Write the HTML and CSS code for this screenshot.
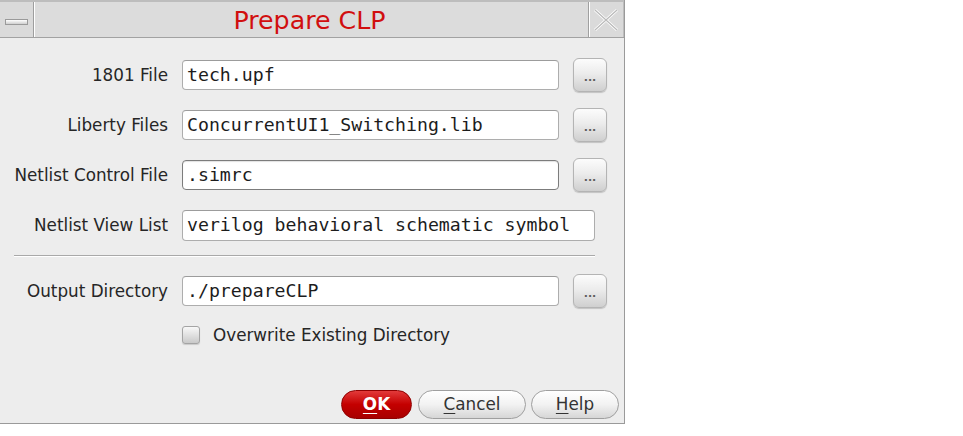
FILE: index.html
```html
<!DOCTYPE html>
<html>
<head>
<meta charset="utf-8">
<title>Prepare CLP</title>
<link rel="stylesheet" href="styles.css">
</head>
<body>
<div class="dialog">
  <div class="titlebar">
    <div class="tb-btn tb-min"><span class="min-bar"></span></div>
    <div class="tb-title">Prepare CLP</div>
    <div class="tb-btn tb-close">
      <svg width="26" height="24" viewBox="0 0 26 24">
        <path d="M2 2 L24 22 M24 2 L2 22" stroke="#ffffff" stroke-width="3" fill="none"/>
        <path d="M2 2 L24 22 M24 2 L2 22" stroke="#b9b9b9" stroke-width="1.2" fill="none"/>
      </svg>
    </div>
  </div>
  <div class="form">
    <div class="row">
      <label class="lbl">1801 File</label>
      <div class="field">tech.upf</div>
      <div class="browse">...</div>
    </div>
    <div class="row">
      <label class="lbl">Liberty Files</label>
      <div class="field">ConcurrentUI1_Switching.lib</div>
      <div class="browse">...</div>
    </div>
    <div class="row">
      <label class="lbl">Netlist Control File</label>
      <div class="field focus">.simrc</div>
      <div class="browse">...</div>
    </div>
    <div class="row">
      <label class="lbl">Netlist View List</label>
      <div class="field wide">verilog behavioral schematic symbol</div>
    </div>
    <div class="sep"></div>
    <div class="row">
      <label class="lbl">Output Directory</label>
      <div class="field">./prepareCLP</div>
      <div class="browse">...</div>
    </div>
    <div class="check-row">
      <span class="checkbox"></span>
      <span class="check-lbl">Overwrite Existing Directory</span>
    </div>
  </div>
  <div class="actions">
    <div class="btn ok"><u>O</u>K</div>
    <div class="btn cancel"><u>C</u>ancel</div>
    <div class="btn help"><u>H</u>elp</div>
  </div>
</div>
</body>
</html>
```

FILE: styles.css
```css
html, body {
  margin: 0;
  padding: 0;
  background: #ffffff;
}
body {
  font-family: "DejaVu Sans", sans-serif;
  color: #222222;
}
.dialog {
  width: 624px;
  height: 423px;
  background: #ededed;
  border-right: 1px solid #9a9a9a;
  border-bottom: 1px solid #9a9a9a;
  display: flex;
  flex-direction: column;
}
.titlebar {
  height: 35px;
  border-top: 2px solid #bdbdbd;
  border-bottom: 1px solid #a2a2a2;
  background: #dcdcdc;
  display: flex;
}
.tb-btn {
  width: 33px;
  display: flex;
  align-items: center;
  justify-content: center;
  background: #dadada;
}
.tb-min {
  border-right: 1px solid #9e9e9e;
  box-shadow: 1px 0 0 #ffffff;
}
.min-bar {
  width: 21px;
  height: 4px;
  border: 1px solid #9a9a9a;
  background: linear-gradient(#ffffff, #cfcfcf);
  margin-top: 4px;
}
.tb-close {
  width: 34px;
  border-left: 1px solid #a0a0a0;
  box-shadow: inset 1px 0 0 #ffffff;
  border-right: 1px solid #bdbdbd;
}
.tb-title {
  flex: 1;
  margin-left: 2px;
  padding-right: 5px;
  text-align: center;
  color: #d10f0f;
  font-size: 25.3px;
  line-height: 35px;
  padding-top: 1px;
}
.form {
  padding-top: 20px;
  display: flex;
  flex-direction: column;
}
.row {
  display: flex;
  align-items: center;
  height: 34px;
  margin-bottom: 16px;
}
.lbl {
  width: 168px;
  text-align: right;
  font-size: 16.8px;
  margin-right: 14px;
  color: #262626;
  white-space: nowrap;
}
.field {
  box-sizing: border-box;
  width: 377px;
  height: 30px;
  background: #ffffff;
  border: 1px solid #adadad;
  border-top-color: #9c9c9c;
  border-radius: 4px;
  font-family: "DejaVu Sans Mono", monospace;
  font-size: 18.2px;
  line-height: 28px;
  padding-left: 4px;
  color: #1c1c1c;
  white-space: nowrap;
  overflow: hidden;
}
.field.focus {
  border-color: #7c7c7c;
  box-shadow: inset 0 1px 1px rgba(0,0,0,0.12);
}
.field.wide {
  width: 413px;
  height: 31px;
}
.browse {
  box-sizing: border-box;
  width: 34px;
  height: 34px;
  margin-left: 14px;
  border: 1px solid #b4b4b4;
  border-radius: 6px;
  background: linear-gradient(#fcfcfc 0%, #ececec 45%, #cfcfcf 100%);
  box-shadow: 0 1px 1px rgba(0,0,0,0.18);
  color: #5e5e5e;
  font-size: 11px;
  font-weight: bold;
  text-align: center;
  line-height: 38px;
}
.row:nth-child(4) {
  margin-bottom: 13px;
}
.sep {
  margin-left: 14px;
  width: 581px;
  height: 1px;
  background: #a9a9a9;
  border-bottom: 1px solid #ffffff;
  margin-bottom: 17px;
}
.check-row {
  display: flex;
  align-items: center;
  margin-left: 182px;
  margin-top: 2px;
  height: 18px;
}
.checkbox {
  box-sizing: border-box;
  width: 18px;
  height: 18px;
  border: 1px solid #a4a4a4;
  border-radius: 3px;
  background: linear-gradient(#f8f8f8, #c9c9c9);
  box-shadow: 0 1px 1px rgba(0,0,0,0.15);
}
.check-lbl {
  margin-left: 13px;
  font-size: 16.8px;
  color: #262626;
}
.actions {
  margin-top: auto;
  margin-bottom: 4px;
  display: flex;
  justify-content: flex-end;
  padding-right: 5px;
  gap: 5px;
}
.btn {
  box-sizing: border-box;
  height: 29px;
  border-radius: 15px;
  font-size: 16.8px;
  line-height: 27px;
  text-align: center;
  border: 1px solid #9f9f9f;
  background: linear-gradient(#ffffff 0%, #f2f2f2 50%, #d6d6d6 100%);
  color: #333333;
}
.btn u {
  text-decoration-thickness: 1px;
  text-underline-offset: 3px;
}
.ok {
  width: 71px;
  background: linear-gradient(#e23a3a 0%, #c40000 50%, #a80000 100%);
  border-color: #8f0000;
  color: #ffffff;
  font-weight: bold;
  margin-right: 1px;
}
.cancel {
  width: 108px;
}
.help {
  width: 88px;
}
```
